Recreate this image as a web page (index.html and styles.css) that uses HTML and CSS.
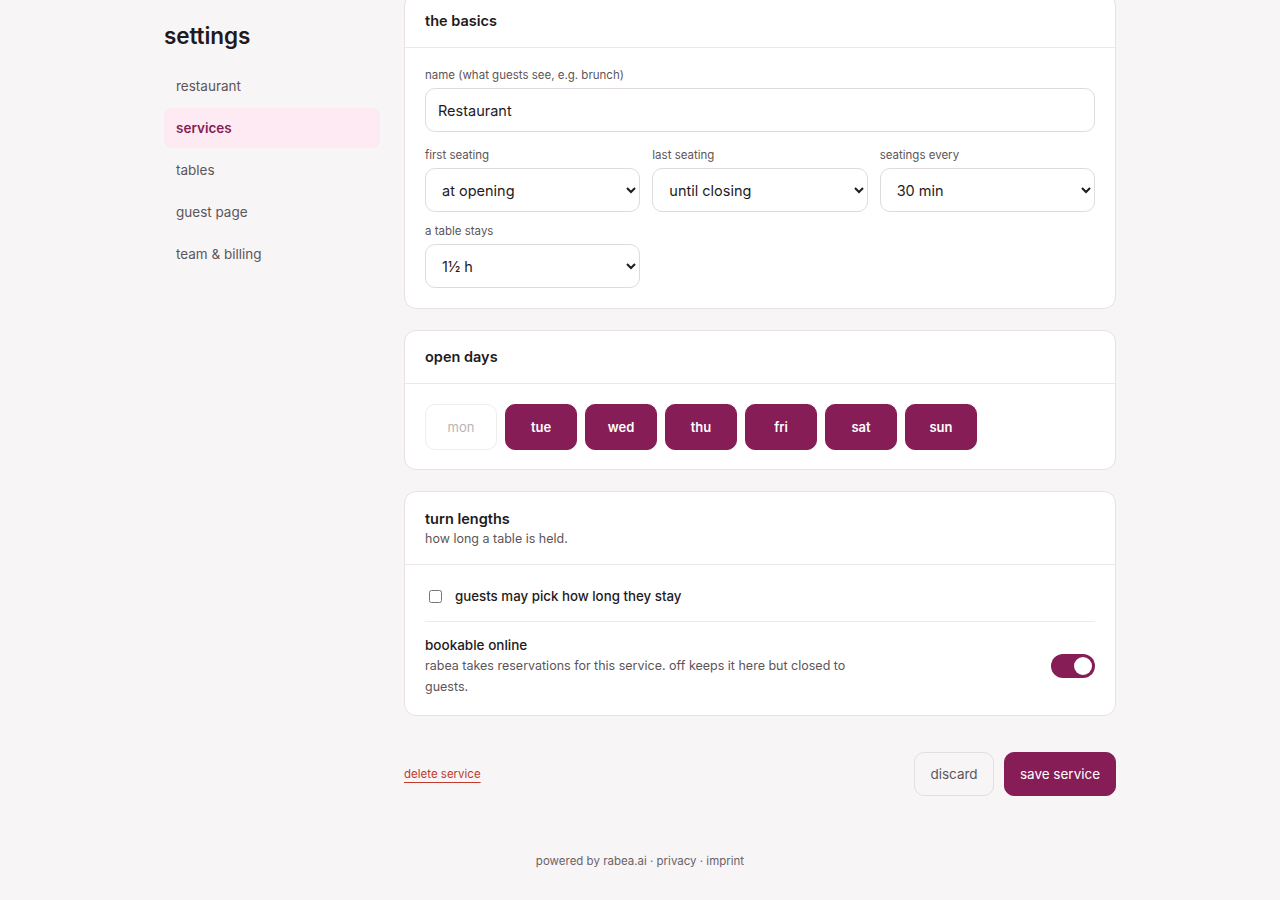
FILE: index.html
```html
<!DOCTYPE html>
<html lang="en">
<head>
<meta charset="utf-8">
<title>settings · services</title>
<link rel="stylesheet" href="styles.css">
</head>
<body>
<div class="page">
  <aside class="sidebar">
    <h1 class="side-title">settings</h1>
    <nav class="side-nav">
      <a class="nav-item">restaurant</a>
      <a class="nav-item active">services</a>
      <a class="nav-item">tables</a>
      <a class="nav-item">guest page</a>
      <a class="nav-item">team &amp; billing</a>
    </nav>
  </aside>
  <main class="main">
    <section class="card">
      <header class="card-head"><h2 class="card-title">the basics</h2></header>
      <div class="card-body basics">
        <label class="field">
          <span class="label">name (what guests see, e.g. brunch)</span>
          <input class="input" type="text" value="Restaurant">
        </label>
        <div class="grid3">
          <label class="field">
            <span class="label">first seating</span>
            <select class="select"><option>at opening</option></select>
          </label>
          <label class="field">
            <span class="label">last seating</span>
            <select class="select"><option>until closing</option></select>
          </label>
          <label class="field">
            <span class="label">seatings every</span>
            <select class="select"><option>30 min</option></select>
          </label>
          <label class="field">
            <span class="label">a table stays</span>
            <select class="select"><option>1½ h</option></select>
          </label>
        </div>
      </div>
    </section>

    <section class="card">
      <header class="card-head"><h2 class="card-title">open days</h2></header>
      <div class="card-body days">
        <button class="day off">mon</button>
        <button class="day">tue</button>
        <button class="day">wed</button>
        <button class="day">thu</button>
        <button class="day">fri</button>
        <button class="day">sat</button>
        <button class="day">sun</button>
      </div>
    </section>

    <section class="card">
      <header class="card-head with-sub">
        <h2 class="card-title">turn lengths</h2>
        <p class="card-sub">how long a table is held.</p>
      </header>
      <div class="card-body turns">
        <label class="check-row">
          <input type="checkbox" class="check">
          <span>guests may pick how long they stay</span>
        </label>
        <div class="toggle-row">
          <div class="toggle-text">
            <div class="toggle-title">bookable online</div>
            <p class="toggle-desc">rabea takes reservations for this service. off keeps it here but closed to guests.</p>
          </div>
          <span class="toggle"><span class="knob"></span></span>
        </div>
      </div>
    </section>

    <div class="actions">
      <a class="delete">delete service</a>
      <div class="action-btns">
        <button class="btn ghost">discard</button>
        <button class="btn primary">save service</button>
      </div>
    </div>
  </main>
</div>
<footer class="footer">powered by rabea.ai · privacy · imprint</footer>
</body>
</html>
```

FILE: styles.css
```css
* { box-sizing: border-box; }
html, body { margin: 0; padding: 0; }
body {
  background: #f7f5f6;
  font-family: Inter, "Noto Sans", "Liberation Sans", sans-serif;
  color: #1f1a1d;
  -webkit-font-smoothing: antialiased;
}
.page {
  width: 952px;
  margin: 0 auto;
  display: flex;
  gap: 24px;
  align-items: flex-start;
}
.sidebar {
  width: 216px;
  flex: none;
  padding-top: 22px;
}
.side-title {
  margin: 0 0 16px 0;
  font-size: 22.5px;
  font-weight: 600;
  letter-spacing: -0.1px;
  color: #1f1a1d;
  line-height: 28px;
}
.side-nav { display: flex; flex-direction: column; gap: 2px; }
.nav-item {
  height: 40px;
  display: flex;
  align-items: center;
  padding: 0 12px;
  font-size: 13.5px;
  color: #5d5559;
  border-radius: 8px;
}
.nav-item.active {
  background: #fdeaf2;
  color: #861d56;
  font-weight: 600;
}
.main {
  width: 712px;
  flex: none;
  margin-top: -6px;
  display: flex;
  flex-direction: column;
  gap: 21px;
}
.card {
  background: #fff;
  border: 1px solid #e6e2e4;
  border-radius: 12px;
}
.card-head {
  padding: 16px 20px 16px;
  border-bottom: 1px solid #ece9eb;
}
.card-head.with-sub { padding: 17px 20px 15px; }
.card-title {
  margin: 0;
  font-size: 14.5px;
  font-weight: 600;
  line-height: 20px;
  color: #1f1a1d;
}
.card-sub {
  margin: 0;
  font-size: 12.5px;
  line-height: 20px;
  color: #5d5559;
}
.card-body { padding: 20px; }
.basics {
  display: flex;
  flex-direction: column;
  gap: 16px;
  padding: 20px 20px 20px;
}
.field { display: flex; flex-direction: column; gap: 5px; }
.label {
  font-size: 11.5px;
  line-height: 15px;
  color: #5d5559;
}
.input, .select {
  height: 44px;
  border: 1px solid #dedade;
  border-radius: 10px;
  background: #fff;
  font-family: inherit;
  font-size: 14.5px;
  color: #1f1a1d;
  width: 100%;
}
.input { padding: 0 12px; }
.select { padding: 0 12px; }
.grid3 {
  display: grid;
  grid-template-columns: repeat(3, 1fr);
  column-gap: 12px;
  row-gap: 12px;
}
.days {
  display: flex;
  gap: 8px;
  padding: 20px 20px 19px;
}
.day {
  width: 72px;
  height: 46px;
  border: 1px solid #861d56;
  border-radius: 10px;
  background: #861d56;
  color: #fff;
  font-family: inherit;
  font-size: 13px;
  font-weight: 600;
}
.day.off {
  background: #fff;
  border-color: #efedee;
  color: #b8b3b6;
  font-weight: 400;
}
.turns { padding: 20px 20px 18px; }
.check-row {
  display: flex;
  align-items: center;
  gap: 13px;
  font-size: 13.3px;
  font-weight: 500;
  line-height: 20px;
  color: #1f1a1d;
  padding: 1px 0 15px 4px;
  border-bottom: 1px solid #ece9eb;
}
.check { margin: 0; width: 13px; height: 13px; }
.toggle-row {
  display: flex;
  align-items: center;
  justify-content: space-between;
  padding-top: 13px;
}
.toggle-text { width: 430px; }
.toggle-title { font-size: 13.5px; font-weight: 500; line-height: 20px; }
.toggle-desc {
  margin: 0;
  font-size: 12.5px;
  line-height: 21px;
  color: #5d5559;
}
.toggle {
  width: 44px;
  height: 24px;
  border-radius: 12px;
  background: #861d56;
  display: flex;
  align-items: center;
  justify-content: flex-end;
  padding: 0 3px;
}
.knob { width: 18px; height: 18px; border-radius: 50%; background: #fff; }
.actions {
  display: flex;
  justify-content: space-between;
  align-items: center;
  margin-top: 15px;
}
.delete {
  font-size: 11.5px;
  color: #c0392b;
  text-decoration: underline;
  text-underline-offset: 4px;
}
.action-btns { display: flex; gap: 10px; }
.btn {
  height: 44px;
  border-radius: 10px;
  font-family: inherit;
  font-size: 13.5px;
  padding: 0 8px;
  white-space: nowrap;
}
.btn.ghost {
  background: #f7f5f6;
  border: 1px solid #e3dfe1;
  color: #5d5559;
  width: 80px;
}
.btn.primary {
  background: #861d56;
  border: 1px solid #861d56;
  color: #fff;
  width: 112px;
}
.footer {
  text-align: center;
  font-size: 11.5px;
  color: #6b6368;
  margin-top: 58px;
}
```
